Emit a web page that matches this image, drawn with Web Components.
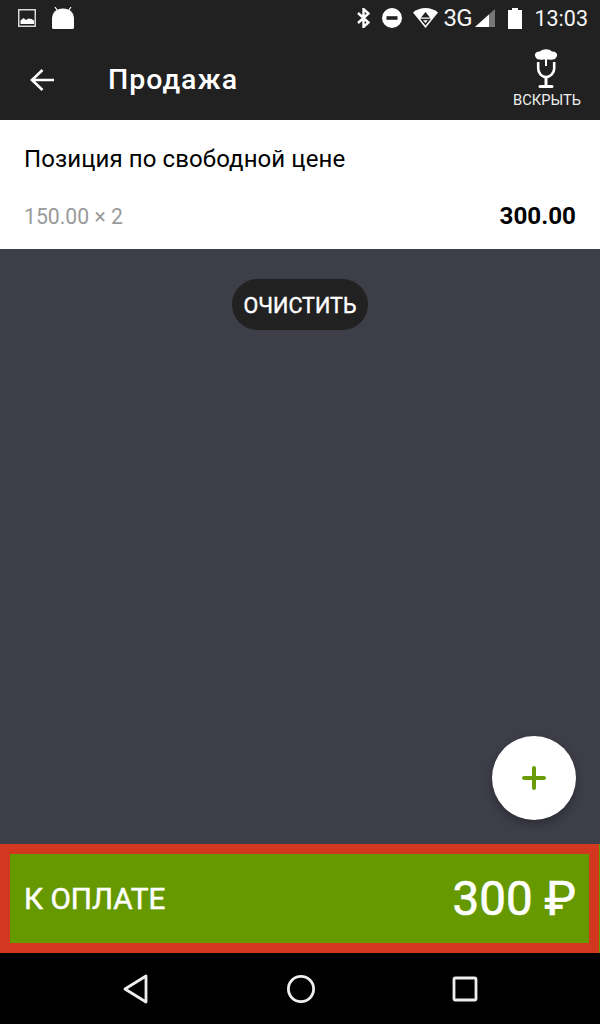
<!DOCTYPE html>
<html>
<head>
<meta charset="utf-8">
<title>Продажа</title>
<style>
html, body { margin: 0; padding: 0; height: 100%; }
body { font-family: Roboto, "Liberation Sans", sans-serif; background: #3e3e49; }
sale-screen { height: 1024px; }
</style>
</head>
<body>
<sale-screen>
  <status-bar slot="top"></status-bar>
  <app-bar slot="top" title="Продажа" action="ВСКРЫТЬ"></app-bar>
  <sale-item name="Позиция по свободной цене" qty="150.00 × 2" sum="300.00"></sale-item>
  <clear-button>ОЧИСТИТЬ</clear-button>
  <add-fab slot="fab"></add-fab>
  <pay-bar slot="bottom" label="К ОПЛАТЕ" sum="300 ₽"></pay-bar>
  <nav-bar slot="bottom"></nav-bar>
</sale-screen>

<script>
;(function(){
'use strict'

class Base extends HTMLElement {
  constructor(){super()
    this.attachShadow({mode: 'open'}).innerHTML = this.tpl()
  }
  tpl(){ return '' }
  attr(n){ return this.getAttribute(n) ?? '' }
}

class SaleScreen extends Base {
  tpl(){ return `
<style>
:host { display: flex; flex-direction: column; width: 600px; background: #3e3e49; }
.body { flex: 1; min-height: 0; position: relative; display: flex; flex-direction: column; align-items: center; }
.fab { position: absolute; right: 24px; bottom: 24px; }
</style>
<slot name="top"></slot>
<div class="body">
  <slot></slot>
  <div class="fab"><slot name="fab"></slot></div>
</div>
<slot name="bottom"></slot>
`}
}
customElements.define('sale-screen',SaleScreen)

class StatusBar extends Base {
  tpl(){ return `
<style>
:host { display: flex; align-items: center; box-sizing: border-box; height: 40px; background: #212121; color: #fff; padding: 0 12px 4px 18px; }
svg { display: block; flex: none; }
.gap { flex: 1; }
.net { margin-left: 5px; width: 28px; font-size: 24px; letter-spacing: -0.8px; color: #f4f4f4; }
.time { margin-left: 12px; font-size: 21.5px; color: #f4f4f4; }
</style>
<svg width="18" height="18" viewBox="0 0 18 18">
  <rect x="0.75" y="0.75" width="16.5" height="16.5" fill="none" stroke="#d8d8d8" stroke-width="1.5"/>
  <path d="M2.5 15v-3.5l3-2.5 2.5 2 2.5-1.5 3 .5 2.5 1.5V15z" fill="#fff"/>
</svg>
<svg width="22" height="22" viewBox="0 0 22 22" style="margin-left:16px">
  <path d="M0 20.500V12C0 5.500 4.500 1.500 11 1.500S22 5.500 22 12V20.500Q22 22 20.500 22H1.500Q0 22 0 20.500z" fill="#fff"/>
  <path d="M5 3 3 0M17 3 19 0" stroke="#fff" stroke-width="1.200"/>
</svg>
<span class="gap"></span>
<svg width="13" height="20" viewBox="0 0 13 20">
  <path d="M1 5 11.500 14.500 6.500 19V1L11.500 5.500 1 15" fill="none" stroke="#fff" stroke-width="2.400"/>
</svg>
<svg width="20" height="20" viewBox="0 0 20 20" style="margin-left:12px">
  <circle cx="10" cy="10" r="10" fill="#fff"/>
  <rect x="4.500" y="8.200" width="11" height="3.600" fill="#212121"/>
</svg>
<svg width="25" height="20" viewBox="0 0 25 20" style="margin-left:11px">
  <path d="M0 4.500C6.500-1.500 18.500-1.500 25 4.500L12.500 20z" fill="#fff"/>
  <path d="M12.500 4 17 9.500H8z" fill="#212121"/>
  <path d="M8.500 11.500h8l-4 4.800z" fill="none" stroke="#212121" stroke-width="1.400"/>
</svg>
<span class="net">3G</span>
<svg width="20" height="18" viewBox="0 0 20 18" style="margin-left:4px">
  <path d="M0 18 20 0V18z" fill="#777"/>
  <path d="M0 18 14 5.400V18z" fill="#fff"/>
</svg>
<svg width="14" height="21" viewBox="0 0 14 21" style="margin-left:13px">
  <path d="M4 0h6v2h4v19H0V2h4z" fill="#fff"/>
</svg>
<span class="time">13:03</span>
`}
}
customElements.define('status-bar',StatusBar)

class AppBar extends Base {
  tpl(){ return `
<style>
:host { display: flex; align-items: center; height: 80px; background: #212121; color: #fff; padding: 0 19px 0 30px; }
svg { display: block; }
.title { margin-left: 53px; font-size: 28.500px; letter-spacing: 1px; font-weight: 500; flex: 1; margin-top: -2px; }
.action { display: flex; flex-direction: column; align-items: center; margin-top: -3px; }
.action svg { margin-left: -2px; }
.action span { font-size: 14.700px; color: #eee; margin-top: 2px; }
</style>
<svg width="25" height="24" viewBox="0 0 25 24">
  <path d="M24 12H2M12.500 2 2 12 12.500 22" fill="none" stroke="#fff" stroke-width="2.600"/>
</svg>
<div class="title">${this.attr('title')}</div>
<div class="action">
  <svg width="24" height="40" viewBox="0 0 24 40">
    <path d="M1.500 8C-.500 4.500 3 2 6 2.500 9 -.5 15 -.5 18 2.500 21 2 24.500 4.500 22.500 8 21.500 11 17 11 15 10.500H13V17H11V10.500H9C7 11 2.500 11 1.500 8z" fill="#fff"/>
    <path d="M4.200 13V19.500C4.200 24.500 8 28 12 28S20.200 24.500 20.200 19.500V13" fill="none" stroke="#fff" stroke-width="2.600"/>
    <path d="M12 28V37" stroke="#fff" stroke-width="3"/>
    <path d="M6 37.500H18" stroke="#fff" stroke-width="3" stroke-linecap="round"/>
  </svg>
  <span>${this.attr('action')}</span>
</div>
`}
}
customElements.define('app-bar',AppBar)

class SaleItem extends Base {
  tpl(){ return `
<style>
:host { display: block; box-sizing: border-box; width: 100%; height: 129px; background: #fff; padding: 24px 24px 0; }
.name { font-size: 24px; line-height: 30px; letter-spacing: .09px; color: #000; }
.row { display: flex; justify-content: space-between; align-items: center; margin-top: 27px; height: 30px; }
.qty { font-size: 21.200px; color: #9a9a9a; }
.sum { font-size: 24.200px; font-weight: 700; color: #000; }
</style>
<div class="name">${this.attr('name')}</div>
<div class="row">
  <span class="qty">${this.attr('qty')}</span>
  <span class="sum">${this.attr('sum')}</span>
</div>
`}
}
customElements.define('sale-item',SaleItem)

class ClearButton extends Base {
  tpl(){ return `
<style>
:host { display: flex; align-items: center; box-sizing: border-box; height: 51px; margin-top: 30px; padding: 2px 12px 0; border-radius: 26px; background: #212121; color: #fff; font-size: 21.500px; -webkit-text-stroke: .4px #fff; }
</style>
<slot></slot>
`}
}
customElements.define('clear-button',ClearButton)

class AddFab extends Base {
  tpl(){ return `
<style>
:host { display: flex; align-items: center; justify-content: center; width: 84px; height: 84px; border-radius: 50%; background: #fff; box-shadow: 0 4px 10px rgba(0,0,0,.3); }
svg { display: block; }
</style>
<svg width="24" height="24" viewBox="0 0 24 24">
  <path d="M12 2V22M2 12H22" stroke="#6a9c0a" stroke-width="4" stroke-linecap="round"/>
</svg>
`}
}
customElements.define('add-fab',AddFab)

class PayBar extends Base {
  tpl(){ return `
<style>
:host { display: block; height: 109px; background: #669900; }
.box { box-sizing: border-box; display: flex; align-items: center; justify-content: space-between; width: 599px; height: 109px; border: 10px solid #d2371f; padding: 0 13px 0 14px; color: #fff; background: #669900; }
.label { font-size: 29.700px; -webkit-text-stroke: .5px #fff; }
.sum { font-size: 47.500px; -webkit-text-stroke: .7px #fff; }
</style>
<div class="box">
  <span class="label">${this.attr('label')}</span>
  <span class="sum">${this.attr('sum')}</span>
</div>
`}
}
customElements.define('pay-bar',PayBar)

class NavBar extends Base {
  tpl(){ return `
<style>
:host { display: flex; align-items: center; justify-content: space-between; box-sizing: border-box; height: 71px; background: #000; padding: 0 121px 0 122px; }
svg { display: block; }
</style>
<svg width="28" height="30" viewBox="0 0 28 30">
  <path d="M24 2V28L3 15z" fill="none" stroke="#eee" stroke-width="2.800" stroke-linejoin="round"/>
</svg>
<svg width="30" height="30" viewBox="0 0 30 30">
  <circle cx="15" cy="15" r="12.600" fill="none" stroke="#eee" stroke-width="2.800"/>
</svg>
<svg width="28" height="30" viewBox="0 0 28 30">
  <rect x="3" y="4" width="22" height="22" rx="1.500" fill="none" stroke="#eee" stroke-width="2.800"/>
</svg>
`}
}
customElements.define('nav-bar',NavBar)

})();
</script>
</body>
</html>
